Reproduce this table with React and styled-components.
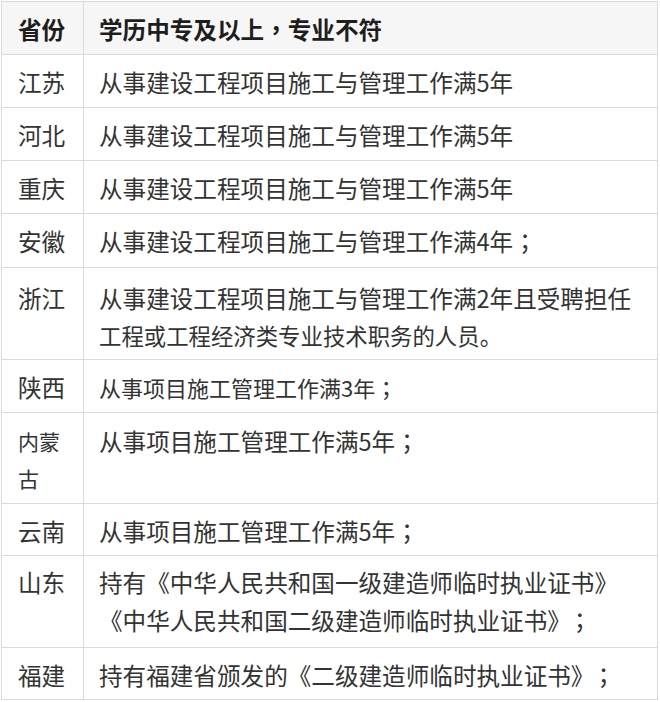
import React from "react";
import styled, { createGlobalStyle } from "styled-components";

const GlobalStyle = createGlobalStyle`
  html, body {
    margin: 0;
    padding: 0;
    background: #ffffff;
  }
  body {
    font-family: "Noto Sans CJK SC", "Noto Sans", sans-serif;
    color: #333333;
  }
`;

const Wrapper = styled.div`
  padding: 1px 0 0 1px;
`;

const Table = styled.table`
  width: 657px;
  border-collapse: collapse;
  table-layout: fixed;
  font-size: 23.6px;
`;

const HeadCell = styled.th`
  background: #f6f6f6;
  border: 1px solid #dadada;
  font-weight: 700;
  color: #1e1e1e;
  text-align: left;
  line-height: 38px;
  padding: 8px 15px 6px ${(p) => p.$pl ?? 15}px;
  white-space: nowrap;
`;

const Cell = styled.td`
  border: 1px solid #dadada;
  vertical-align: top;
  background: #ffffff;
  white-space: nowrap;
  padding: ${(p) => p.$pt ?? 8}px 15px ${(p) => p.$pb ?? 6}px
    ${(p) => p.$pl ?? 15}px;
  line-height: ${(p) => p.$lh ?? 38}px;
  font-size: ${(p) => p.$fs ?? 23.6}px;
`;

const Line = styled.span`
  display: block;
  font-size: ${(p) => (p.$fs ? `${p.$fs}px` : "inherit")};
`;

const Punct = styled.span`
  font-family: "Noto Sans CJK TC", "Noto Sans CJK SC", sans-serif;
  margin-left: ${(p) => (p.$gap ? "9px" : "0")};
`;

/* render full-width ；and ，with centred (TC-style) glyphs */
function T({ children }) {
  const parts = children.split(/([；，])/);
  return parts.map((s, i) =>
    s === "；" || s === "，" ? (
      <Punct key={i} $gap={i > 0 && parts[i - 1].endsWith("》")}>
        {s}
      </Punct>
    ) : (
      s
    )
  );
}

const rows = [
  { p: ["江苏"], c: ["从事建设工程项目施工与管理工作满5年"] },
  { p: ["河北"], c: ["从事建设工程项目施工与管理工作满5年"] },
  { p: ["重庆"], c: ["从事建设工程项目施工与管理工作满5年"] },
  { p: ["安徽"], c: ["从事建设工程项目施工与管理工作满4年；"], pb: 7 },
  {
    p: ["浙江"],
    c: ["从事建设工程项目施工与管理工作满2年且受聘担任", "工程或工程经济类专业技术职务的人员。"],
    c2fs: 22.4,
    lh: 37,
    pt: 12,
    pb: 5,
  },
  { p: ["陕西"], c: ["从事项目施工管理工作满3年；"], fs: 22 },
  {
    p: ["内蒙", "古"],
    pfs: 21,
    plh: 36.5,
    ppt: 10,
    c: ["从事项目施工管理工作满5年；"],
    pt: 9,
    pb: 7,
  },
  { p: ["云南"], c: ["从事项目施工管理工作满5年；"], pb: 5 },
  {
    p: ["山东"],
    c: ["持有《中华人民共和国一级建造师临时执业证书》", "《中华人民共和国二级建造师临时执业证书》；"],
    lh: 37.5,
    pt: 8,
    pb: 8,
  },
  { p: ["福建"], c: ["持有福建省颁发的《二级建造师临时执业证书》；"], pb: 5 },
];

export default function App() {
  return (
    <>
      <GlobalStyle />
      <Wrapper>
        <Table>
          <colgroup>
            <col style={{ width: 82 }} />
            <col />
          </colgroup>
          <thead>
            <tr>
              <HeadCell $pl={16}>省份</HeadCell>
              <HeadCell>
                <T>学历中专及以上，专业不符</T>
              </HeadCell>
            </tr>
          </thead>
          <tbody>
            {rows.map((r, i) => (
              <tr key={i}>
                <Cell
                  $pl={16}
                  $fs={r.pfs}
                  $lh={r.plh ?? r.lh}
                  $pt={r.ppt ?? r.pt}
                  $pb={r.pb}
                >
                  {r.p.map((t, j) => (
                    <Line key={j}>{t}</Line>
                  ))}
                </Cell>
                <Cell $fs={r.fs} $lh={r.lh} $pt={r.pt} $pb={r.pb}>
                  {r.c.map((t, j) => (
                    <Line key={j} $fs={j === 1 ? r.c2fs : undefined}>
                      <T>{t}</T>
                    </Line>
                  ))}
                </Cell>
              </tr>
            ))}
          </tbody>
        </Table>
      </Wrapper>
    </>
  );
}
